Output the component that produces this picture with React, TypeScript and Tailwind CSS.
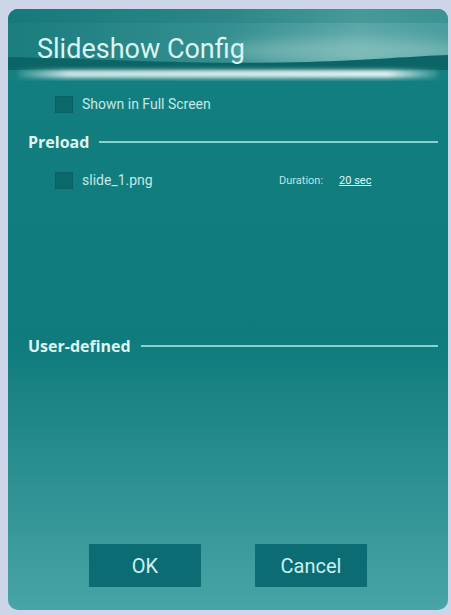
import React from 'react';

function HeaderArt() {
  return (
    <svg className="absolute inset-0 h-full w-full" viewBox="0 0 440 72" preserveAspectRatio="none">
      <defs>
        <linearGradient id="hdrBase" x1="0" y1="0" x2="1" y2="0">
          <stop offset="0" stopColor="#1a7d7e" />
          <stop offset="0.5" stopColor="#358f90" />
          <stop offset="0.8" stopColor="#5ba8a7" />
          <stop offset="1" stopColor="#4a9e9e" />
        </linearGradient>
        <linearGradient id="glow" x1="0" y1="0" x2="1" y2="0">
          <stop offset="0" stopColor="#ffffff" stopOpacity="0.1" />
          <stop offset="0.12" stopColor="#ffffff" stopOpacity="0.8" />
          <stop offset="0.88" stopColor="#ffffff" stopOpacity="0.9" />
          <stop offset="1" stopColor="#ffffff" stopOpacity="0.1" />
        </linearGradient>
        <filter id="blur4" x="-20%" y="-50%" width="140%" height="200%">
          <feGaussianBlur stdDeviation="7" />
        </filter>
        <filter id="blur2" x="-10%" y="-100%" width="120%" height="300%">
          <feGaussianBlur stdDeviation="2" />
        </filter>
      </defs>
      <rect x="0" y="0" width="440" height="72" fill="url(#hdrBase)" />
      <ellipse cx="340" cy="42" rx="120" ry="12" fill="#d8eeea" opacity="0.3" filter="url(#blur4)" />
      <rect x="0" y="0" width="440" height="14" fill="#0f6f70" opacity="0.25" />
      <path d="M0 48 C 90 50, 200 56, 300 53 C 360 51, 410 47, 440 46 L440 61 L0 61 Z" fill="#0b6465" />
      <rect x="0" y="61" width="440" height="11" fill="#137f80" />
      <rect x="10" y="61" width="420" height="8" fill="url(#glow)" filter="url(#blur2)" />
    </svg>
  );
}

function Box() {
  return <span className="block h-[17px] w-[18px] shrink-0 bg-[#0b686b] shadow-[inset_0_0_2px_rgba(0,0,0,0.25)]" />;
}

function SectionHead({ label }: { label: string }) {
  return (
    <div className="flex items-center gap-[10px] pr-[10px] pl-[20px]">
      <span className="font-['Open_Sans',sans-serif] text-[16px] font-bold leading-[20px] text-[#def6f3]">{label}</span>
      <span className="h-[2px] flex-1 bg-[#86d2cf]" />
    </div>
  );
}

export default function App() {
  return (
    <div className="h-[615px] w-[451px] bg-[#cdd6e9] pt-[9px] pr-[3px] pb-[5px] pl-[8px] font-['Roboto',sans-serif]">
      <div className="flex h-full flex-col overflow-hidden rounded-[10px] bg-[linear-gradient(to_bottom,#137f80_0%,#0f7b7c_55%,#48a4a6_100%)]">
        <div className="relative h-[72px] shrink-0">
          <HeaderArt />
          <h1 className="relative pt-[25px] pl-[29px] text-[27px] leading-[31px] text-[#dcf4f1]">Slideshow Config</h1>
        </div>

        <label className="mt-[15px] flex items-center gap-[9px] pl-[47px]">
          <Box />
          <span className="text-[14px] leading-[17px] text-[#c4e9e6]">Shown in Full Screen</span>
        </label>

        <div className="mt-[19px]">
          <SectionHead label="Preload" />
        </div>

        <div className="mt-[20px] flex items-center pl-[47px]">
          <Box />
          <span className="ml-[9px] w-[197px] text-[14px] leading-[17px] text-[#c4e9e6]">slide_1.png</span>
          <span className="text-[11px] leading-[17px] text-[#bfe6e4]">Duration:</span>
          <span className="ml-[16px] text-[11px] leading-[17px] text-[#e6fbf8] underline">20 sec</span>
        </div>

        <div className="mt-[147px]">
          <SectionHead label="User-defined" />
        </div>

        <div className="flex-1" />

        <div className="flex justify-center gap-[54px] pb-[23px]">
          <button className="h-[43px] w-[112px] bg-[#0c6c74] text-[20px] text-[#cbf1f1]">OK</button>
          <button className="h-[43px] w-[112px] bg-[#0c6c74] text-[20px] text-[#cbf1f1]">Cancel</button>
        </div>
      </div>
    </div>
  );
}
